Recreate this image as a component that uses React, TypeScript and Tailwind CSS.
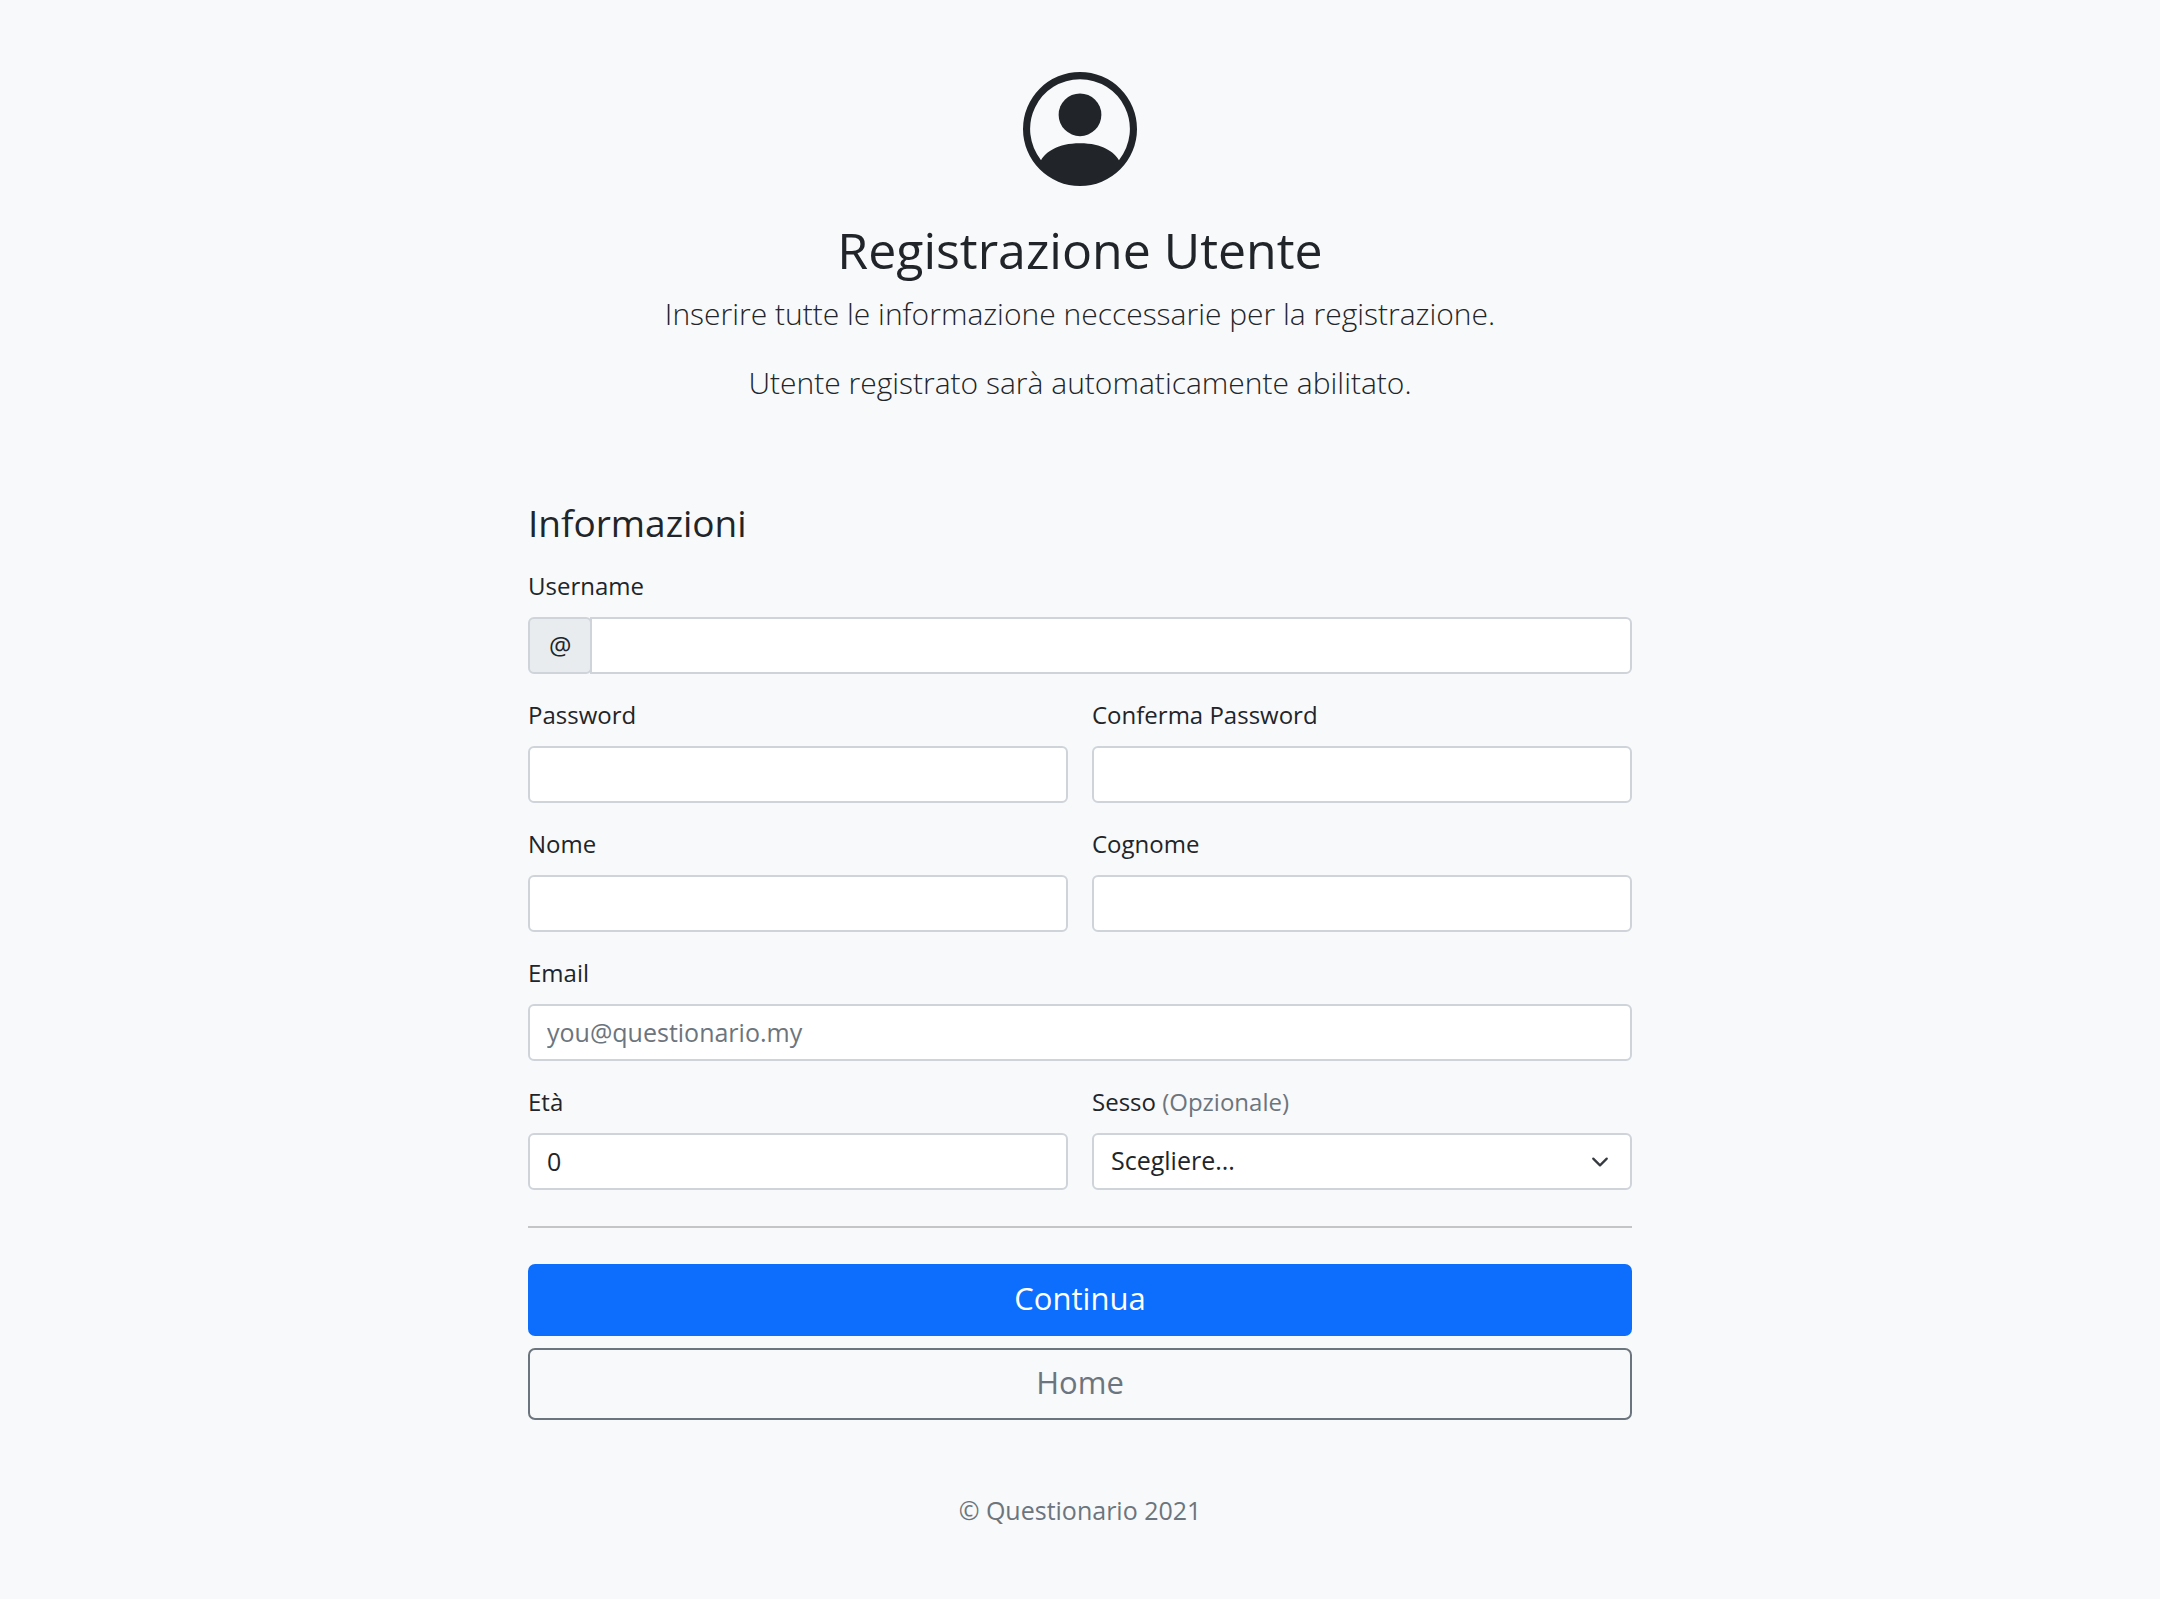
import type { InputHTMLAttributes, ReactNode } from "react";

const control =
  "block h-[57px] w-full min-w-0 rounded-md border-2 border-[#ced4da] bg-white px-[17px] pb-0.5 text-[25px] text-[#212529] outline-none placeholder:text-[#6c757d] focus:border-[#86b7fe]";

function Label({ htmlFor, children }: { htmlFor: string; children: ReactNode }) {
  return (
    <label htmlFor={htmlFor} className="mb-3.5 block text-2xl leading-[34px]">
      {children}
    </label>
  );
}

type FieldProps = InputHTMLAttributes<HTMLInputElement> & { id: string; label: string };

function Field({ id, label, className = "", ...rest }: FieldProps) {
  return (
    <div className={className}>
      <Label htmlFor={id}>{label}</Label>
      <input id={id} name={id} className={control} {...rest} />
    </div>
  );
}

function PersonCircle() {
  return (
    <svg viewBox="0 0 16 16" fill="currentColor" aria-hidden="true" className="mb-9 size-[114px]">
      <path d="M11 6a3 3 0 1 1-6 0 3 3 0 0 1 6 0z" />
      <path
        fillRule="evenodd"
        d="M0 8a8 8 0 1 1 16 0A8 8 0 0 1 0 8zm8-7a7 7 0 0 0-5.468 11.37C3.242 11.226 4.805 10 8 10s4.757 1.225 5.468 2.37A7 7 0 0 0 8 1z"
      />
    </svg>
  );
}

export default function App() {
  return (
    <div className="min-h-screen bg-[#f8f9fa] px-4 font-['Segoe_UI','Open_Sans',sans-serif] text-[#212529]">
      <div className="mx-auto max-w-[1104px]">
        <header className="flex flex-col items-center py-[72px] text-center">
          <PersonCircle />
          <h2 className="mb-3.5 text-[50px] leading-[56px]">Registrazione Utente</h2>
          <p className="mb-[26px] text-[30px] leading-[43px] font-light">
            Inserire tutte le informazione neccessarie per la registrazione.
          </p>
          <p className="mb-[26px] text-[30px] leading-[43px] font-light">
            Utente registrato sarà automaticamente abilitato.
          </p>
        </header>

        <main>
          <h4 className="mb-[26px] text-[37px] leading-[41px]">Informazioni</h4>
          <form onSubmit={(e) => e.preventDefault()}>
            <div className="grid grid-cols-2 gap-6">
              <div className="col-span-2">
                <Label htmlFor="username">Username</Label>
                <div className="flex">
                  <span className="flex items-center rounded-md border-2 border-[#ced4da] bg-[#e9ecef] px-[19px] text-[25px]">
                    @
                  </span>
                  <div className="-ml-0.5 flex-1">
                    <input id="username" name="username" type="text" className={control + " rounded-l-none"} />
                  </div>
                </div>
              </div>
              <Field id="password" label="Password" type="password" />
              <Field id="conferma" label="Conferma Password" type="password" />
              <Field id="nome" label="Nome" type="text" />
              <Field id="cognome" label="Cognome" type="text" />
              <Field
                id="email"
                label="Email"
                type="email"
                placeholder="you@questionario.my"
                className="col-span-2"
              />
              <Field id="eta" label="Età" type="number" defaultValue={0} />
              <div>
                <Label htmlFor="sesso">
                  Sesso <span className="text-[#6c757d]">(Opzionale)</span>
                </Label>
                <div className="relative">
                  <select id="sesso" name="sesso" className={control + " appearance-none"}>
                    <option>Scegliere...</option>
                    <option>Maschio</option>
                    <option>Femmina</option>
                  </select>
                  <svg
                    viewBox="0 0 16 16"
                    fill="none"
                    stroke="#343a40"
                    strokeWidth="2"
                    strokeLinecap="round"
                    strokeLinejoin="round"
                    aria-hidden="true"
                    className="pointer-events-none absolute inset-y-0 right-[23px] my-auto size-[18px]"
                  >
                    <path d="M2 5l6 6 6-6" />
                  </svg>
                </div>
              </div>
            </div>

            <hr className="my-9 h-0.5 border-0 bg-[#c3c5c7]" />

            <div className="flex flex-col gap-3">
              <button
                type="submit"
                className="h-[72px] w-full rounded-[7px] bg-[#0d6efd] pb-1 text-[31px] text-white"
              >
                Continua
              </button>
              <button
                type="button"
                className="h-[72px] w-full rounded-[7px] border-2 border-[#6c757d] pb-1 text-[31px] text-[#6c757d]"
              >
                Home
              </button>
            </div>
          </form>
        </main>

        <footer className="py-[72px] text-center text-[25px] leading-9 text-[#6c757d]">
          <p>© Questionario 2021</p>
        </footer>
      </div>
    </div>
  );
}
